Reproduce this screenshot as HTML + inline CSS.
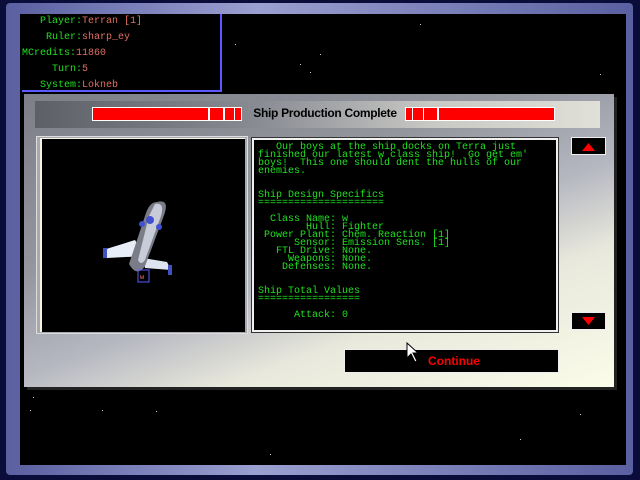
<!DOCTYPE html>
<html><head><style>
*{margin:0;padding:0;box-sizing:border-box}
body{width:640px;height:480px;background:#0a0c3a;position:relative;overflow:hidden;font-family:"Liberation Mono",monospace}
.a{position:absolute}
.frame{left:6px;top:3px;width:627px;height:472px;border-radius:4px;background:linear-gradient(90deg,#5a60a0,#9aa0d0 40%,#5a60a0);}
.inner{left:20px;top:14px;width:606px;height:451px;background:#000}
.star{position:absolute;width:1px;height:1px;background:#ccc}
.status{left:22px;top:14px;width:200px;height:78px;border:2px solid #5a5aff;border-top:none;border-left:none;background:#000;font-size:10px;line-height:16px;padding-top:0}
.status div{white-space:pre}
.g{color:#20e020}.r{color:#e07060}
.dlg{left:24px;top:94px;width:590px;height:293px;background:linear-gradient(160deg,#7c7e88 0%,#94969e 35%,#b4b6c0 55%,#e8e8dc 72%,#fcfcea 100%);box-shadow:3px 3px 0 #222}
.tbar{left:35px;top:101px;width:565px;height:27px;background:linear-gradient(90deg,#5e6068,#8a8c94 40%,#c8c8c4 70%,#e0e0d8)}
.rb{background:#f00;border:1px solid #fff;height:14px;top:107px}
.title{left:230px;top:106px;width:190px;text-align:center;font:bold 12px "Liberation Sans",sans-serif;color:#000;letter-spacing:-0.3px}
.txt{left:252px;top:138px;width:306px;height:194px;background:#000;border:2px solid #f0f0f0;outline:1px solid #333;color:#20e020;font-size:10px;line-height:8px;padding:4px 0 0 4px;white-space:pre;letter-spacing:0}
.btn{background:#000;border:1px solid #eee;}
</style></head><body>
<div class="a frame"></div>
<div class="a inner">
<span class="star" style="left:215px;top:30px"></span><span class="star" style="left:300px;top:40px"></span><span class="star" style="left:290px;top:58px"></span><span class="star" style="left:280px;top:50px"></span><span class="star" style="left:23px;top:367px"></span><span class="star" style="left:13px;top:383px"></span><span class="star" style="left:10px;top:396px"></span><span class="star" style="left:82px;top:396px"></span><span class="star" style="left:136px;top:397px"></span><span class="star" style="left:250px;top:440px"></span><span class="star" style="left:500px;top:425px"></span><span class="star" style="left:560px;top:400px"></span><span class="star" style="left:400px;top:10px"></span><span class="star" style="left:580px;top:60px"></span>
</div>
<div class="a status"><div><span class="g">   Player:</span><span class="r">Terran [1]</span></div><div><span class="g">    Ruler:</span><span class="r">sharp_ey</span></div><div><span class="g">MCredits:</span><span class="r">11860</span></div><div><span class="g">     Turn:</span><span class="r">5</span></div><div><span class="g">   System:</span><span class="r">Lokneb</span></div></div>
<div class="a dlg"></div>
<div class="a tbar"></div>
<div class="a rb" style="left:92px;width:117px"></div><div class="a rb" style="left:209px;width:15px"></div><div class="a rb" style="left:224px;width:11px"></div><div class="a rb" style="left:234px;width:8px"></div>
<div class="a rb" style="left:405px;width:8px"></div><div class="a rb" style="left:412px;width:12px"></div><div class="a rb" style="left:423px;width:15px"></div><div class="a rb" style="left:438px;width:117px"></div>
<div class="a title">Ship Production Complete</div>
<div class="a" style="left:36px;top:136px;width:212px;height:198px;border:1px solid #ddd;background:#a8a8b0"></div>
<div class="a" style="left:40px;top:138px;width:205px;height:194px;background:#000;border-left:2px solid #f4f4e0;border-top:1px solid #f4f4e0"></div>
<svg class="a" style="left:95px;top:190px" width="90" height="100" viewBox="0 0 90 100">
<polygon points="40,50 8,60 12,68 50,66" fill="#e8eef8"/>
<polygon points="48,68 72,72 76,80 50,78" fill="#dde4f0"/>
<rect x="8" y="58" width="4" height="10" fill="#4050c0"/><rect x="73" y="75" width="4" height="10" fill="#4050c0"/>
<path d="M62,12 Q76,8 68,28 L50,76 Q42,88 34,74 L50,26 Q54,12 62,12Z" fill="#7a7c88"/>
<path d="M60,14 Q70,12 66,26 L50,70 Q46,76 43,70 L54,26Z" fill="#c8ccd8"/>
<circle cx="55" cy="30" r="4" fill="#4050d0"/><circle cx="64" cy="37" r="3" fill="#4050d0"/><circle cx="47" cy="34" r="3" fill="#4050d0"/>
<rect x="43" y="80" width="11" height="12" fill="none" stroke="#5a5aff"/><text x="45" y="89" font-size="7" fill="#e07060" font-family="Liberation Mono">w</text>
</svg>
<div class="a txt">   Our boys at the ship docks on Terra just
finished our latest w class ship!  Go get em'
boys!  This one should dent the hulls of our
enemies.


Ship Design Specifics
=====================

  Class Name: w
        Hull: Fighter
 Power Plant: Chem. Reaction [1]
      Sensor: Emission Sens. [1]
   FTL Drive: None.
     Weapons: None.
    Defenses: None.


Ship Total Values
=================

      Attack: 0</div>
<div class="a btn" style="left:571px;top:137px;width:35px;height:18px"><svg width="33" height="16"><polygon points="10,13 23,13 16.5,5" fill="#f00"/></svg></div>
<div class="a btn" style="left:571px;top:312px;width:35px;height:18px"><svg width="33" height="16"><polygon points="10,4 23,4 16.5,12" fill="#f00"/></svg></div>
<div class="a btn" style="left:344px;top:349px;width:215px;height:24px;color:#f00;font:bold 12px 'Liberation Sans',sans-serif;text-align:center;line-height:22px;padding-left:5px">Continue</div>
<svg class="a" style="left:406px;top:342px" width="14" height="22"><path d="M1,1 L1,16 L5,12 L9,20 L11,19 L7,11 L12,11 Z" fill="#fff" stroke="#000" stroke-width="1"/></svg>
</body></html>
